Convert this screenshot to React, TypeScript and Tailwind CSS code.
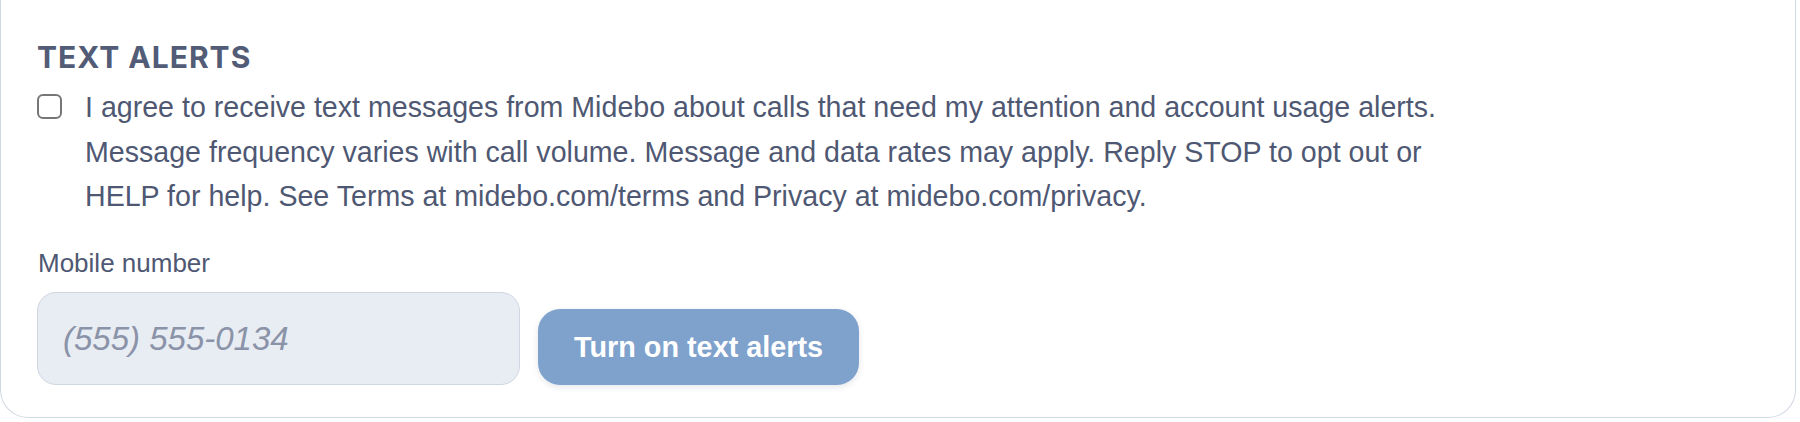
import React from "react";

export default function App() {
  return (
    <div className="w-[1800px] h-[422px] bg-white overflow-hidden">
      <div className="w-[1796px] bg-white border-x border-b border-[#d2d8e3] rounded-b-[28px] pl-[36px] pt-[37px] pb-[32px]">
        <h2
          className="text-[30px] leading-[40px] font-bold tracking-[1px] text-[#535c77] uppercase"
          style={{ fontFamily: "Inter, 'Noto Sans', sans-serif" }}
        >
          Text Alerts
        </h2>
        <label
          className="mt-[8px] flex gap-[23px] items-start"
          style={{ fontFamily: "'Liberation Sans', Arial, sans-serif" }}
        >
          <span className="mt-[9px] w-[25px] h-[25px] shrink-0 rounded-[6px] border-2 border-[#767676] bg-white" />
          <span className="max-w-[1390px] text-[28.6px] leading-[44.6px] text-[#4f5873]">
            I agree to receive text messages from Midebo about calls that need my attention and account usage alerts.
            Message frequency varies with call volume. Message and data rates may apply. Reply STOP to opt out or
            HELP for help. See Terms at midebo.com/terms and Privacy at midebo.com/privacy.
          </span>
        </label>
        <div
          className="mt-[25px]"
          style={{ fontFamily: "'Liberation Sans', Arial, sans-serif" }}
        >
          <div className="text-[26px] leading-[38.4px] text-[#4f5873] ml-[1px]">Mobile number</div>
          <div className="mt-[10px] flex items-end gap-[18px]">
            <input
              type="tel"
              placeholder="(555) 555-0134"
              className="w-[483px] h-[93px] rounded-[19px] border-[1.5px] border-[#d0d6e2] bg-[#e8ecf3] pl-[25px] text-[33px] italic text-[#4f5873] placeholder:text-[#8a93a8] placeholder:italic outline-none"
              style={{ fontFamily: "'Liberation Sans', Arial, sans-serif" }}
            />
            <button
              className="h-[76px] px-[36px] rounded-[22px] bg-[#7fa2cc] text-white font-bold text-[28.8px] shadow-[0_2px_6px_rgba(30,50,90,0.12)]"
              style={{ fontFamily: "'Liberation Sans', Arial, sans-serif" }}
            >
              Turn on text alerts
            </button>
          </div>
        </div>
      </div>
    </div>
  );
}
